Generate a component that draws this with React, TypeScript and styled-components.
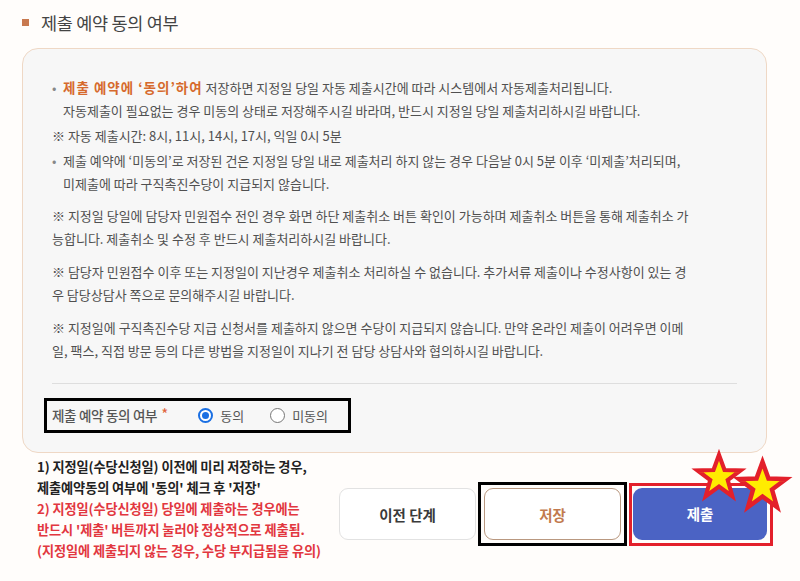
import React, { useState } from 'react'
import styled, { createGlobalStyle } from 'styled-components'

const GlobalStyle = createGlobalStyle`
    body {
        margin: 0;
        background: #fffdfb;
        font-family: 'Noto Sans CJK KR', 'Noto Sans', sans-serif;
    }
`

const Page = styled.div`
    padding: 12px 33px 0 22px;
    height: 581px;
    box-sizing: border-box;
`

const TitleRow = styled.div`
    display: flex;
    align-items: center;
    height: 20px;
`

const TitleMark = styled.span`
    width: 7px;
    height: 7px;
    background: #c8794f;
`

const TitleText = styled.h2`
    margin: 0 0 0 12px;
    font-size: 17.5px;
    font-weight: 400;
    color: #444;
    letter-spacing: -0.3px;
`

const Card = styled.div`
    margin-top: 16px;
    border: 1px solid #efd8c5;
    border-radius: 16px;
    background: #f7f7f7;
    padding: 27px 29px 19px;
    font-size: 13px;
    line-height: 23px;
    color: #505050;
`

const Line = styled.div<{ $gap?: number }>`
    white-space: nowrap;
    margin-top: ${({ $gap }) => $gap ?? 0}px;
`

const BulletItem = styled.div<{ $gap?: number }>`
    display: flex;
    white-space: nowrap;
    margin-top: ${({ $gap }) => $gap ?? 0}px;
`

const BulletDot = styled.span`
    width: 11px;
    flex-shrink: 0;
    color: #888;
`

const Highlight = styled.span`
    color: #d66a2d;
    font-weight: 700;
    font-size: 13.5px;
    letter-spacing: 1px;
`

const Divider = styled.hr`
    margin: 21px 0 0;
    border: 0;
    height: 1px;
    background: #dedede;
`

const ConsentBox = styled.div`
    margin: 14px 0 0 -8px;
    width: 307px;
    height: 35px;
    box-sizing: border-box;
    border: 3px solid #000;
    display: flex;
    align-items: center;
    padding: 0 5px;
    white-space: nowrap;

    & > * {
        flex-shrink: 0;
    }
`

const ConsentLabel = styled.span`
    font-size: 13.5px;
    font-weight: 500;
    color: #555;
    letter-spacing: -0.3px;
`

const Required = styled.span`
    color: #e0633a;
    font-size: 15px;
    line-height: 1;
    margin: 0 30px 0 4px;
    align-self: flex-start;
    padding-top: 5px;
`

const RadioLabel = styled.label`
    display: flex;
    align-items: center;
    gap: 7px;
    margin-right: 26px;
    font-size: 13px;
    color: #555;
    cursor: pointer;
`

const RadioCircle = styled.span<{ $checked: boolean }>`
    width: 15px;
    height: 15px;
    box-sizing: border-box;
    border-radius: 50%;
    background: #fff;
    border: ${({ $checked }) => ($checked ? '2px solid #1a6fe3' : '1px solid #767676')};
    display: flex;
    align-items: center;
    justify-content: center;

    &::after {
        content: '';
        width: 7px;
        height: 7px;
        border-radius: 50%;
        background: ${({ $checked }) => ($checked ? '#1a6fe3' : 'transparent')};
    }
`

const Bottom = styled.div`
    display: flex;
    align-items: flex-start;
`

const Notes = styled.div`
    margin: 3px 0 0 15px;
    font-size: 13.2px;
    font-weight: 700;
    line-height: 21px;
    letter-spacing: -0.1px;
`

const NoteLine = styled.div<{ $warn?: boolean }>`
    white-space: nowrap;
    color: ${({ $warn }) => ($warn ? '#e2373f' : '#222')};
`

const Buttons = styled.div`
    margin: 29px -6px 0 auto;
    display: flex;
    align-items: center;
`

// annotation frames drawn around the save / submit buttons
const Frame = styled.div<{ $color: string; $pad: string }>`
    position: relative;
    margin-left: 2px;
    border: 3px solid ${({ $color }) => $color};
    padding: ${({ $pad }) => $pad};
    display: flex;
`

const Button = styled.button<{ $variant: 'prev' | 'save' | 'submit' }>`
    height: 52px;
    box-sizing: border-box;
    border-radius: 9px;
    font-family: inherit;
    font-size: 14.5px;
    font-weight: 700;
    cursor: pointer;
    ${({ $variant }) =>
        $variant === 'prev'
            ? `width: 137px; background: #fff; border: 1px solid #e2e2e2; color: #3a3a3a;`
            : $variant === 'save'
            ? `width: 137px; background: #fff; border: 1px solid #b99880; color: #c27a4e;`
            : `width: 134px; background: #4b63c4; border: 0; color: #fff;`}
`

const Star = styled.svg<{ $left: number; $top: number }>`
    position: absolute;
    left: ${({ $left }) => $left}px;
    top: ${({ $top }) => $top}px;
    overflow: visible;
    pointer-events: none;
`

function StarMark({ left, top, w, h }: { left: number; top: number; w: number; h: number }) {
    return (
        <Star $left={left} $top={top} width={w} height={h} viewBox="0 0 100 100">
            <polygon
                points="50,4 62,37 97,38 69,59 79,94 50,73 21,94 31,59 3,38 38,37"
                fill="#ffec00"
                stroke="#e3202b"
                strokeWidth="9"
                strokeLinejoin="miter"
            />
        </Star>
    )
}

export default function App() {
    const [consent, setConsent] = useState(true)

    return (
        <>
            <GlobalStyle />
            <Page>
                <TitleRow>
                    <TitleMark />
                    <TitleText>제출 예약 동의 여부</TitleText>
                </TitleRow>

                <Card>
                    <BulletItem>
                        <BulletDot>•</BulletDot>
                        <div>
                            <Highlight>제출 예약에 ‘동의’하여</Highlight> 저장하면 지정일 당일 자동 제출시간에 따라
                            시스템에서 자동제출처리됩니다.
                            <br />
                            자동제출이 필요없는 경우 미동의 상태로 저장해주시길 바라며, 반드시 지정일 당일
                            제출처리하시길 바랍니다.
                        </div>
                    </BulletItem>
                    <Line $gap={2}>※ 자동 제출시간: 8시, 11시, 14시, 17시, 익일 0시 5분</Line>
                    <BulletItem $gap={2}>
                        <BulletDot>•</BulletDot>
                        <div>
                            제출 예약에 ‘미동의’로 저장된 건은 지정일 당일 내로 제출처리 하지 않는 경우 다음날 0시 5분
                            이후 ‘미제출’처리되며,
                            <br />
                            미제출에 따라 구직촉진수당이 지급되지 않습니다.
                        </div>
                    </BulletItem>

                    <Line $gap={9}>
                        ※ 지정일 당일에 담당자 민원접수 전인 경우 화면 하단 제출취소 버튼 확인이 가능하며 제출취소
                        버튼을 통해 제출취소 가
                        <br />
                        능합니다. 제출취소 및 수정 후 반드시 제출처리하시길 바랍니다.
                    </Line>
                    <Line $gap={10}>
                        ※ 담당자 민원접수 이후 또는 지정일이 지난경우 제출취소 처리하실 수 없습니다. 추가서류 제출이나
                        수정사항이 있는 경
                        <br />
                        우 담당상담사 쪽으로 문의해주시길 바랍니다.
                    </Line>
                    <Line $gap={10}>
                        ※ 지정일에 구직촉진수당 지급 신청서를 제출하지 않으면 수당이 지급되지 않습니다. 만약 온라인
                        제출이 어려우면 이메
                        <br />
                        일, 팩스, 직접 방문 등의 다른 방법을 지정일이 지나기 전 담당 상담사와 협의하시길 바랍니다.
                    </Line>

                    <Divider />

                    <ConsentBox>
                        <ConsentLabel>제출 예약 동의 여부</ConsentLabel>
                        <Required>*</Required>
                        <RadioLabel onClick={() => setConsent(true)}>
                            <RadioCircle $checked={consent} />
                            동의
                        </RadioLabel>
                        <RadioLabel onClick={() => setConsent(false)}>
                            <RadioCircle $checked={!consent} />
                            미동의
                        </RadioLabel>
                    </ConsentBox>
                </Card>

                <Bottom>
                    <Notes>
                        <NoteLine>1) 지정일(수당신청일) 이전에 미리 저장하는 경우,</NoteLine>
                        <NoteLine>제출예약동의 여부에 '동의' 체크 후 '저장'</NoteLine>
                        <NoteLine $warn>2) 지정일(수당신청일) 당일에 제출하는 경우에는</NoteLine>
                        <NoteLine $warn>반드시 '제출' 버튼까지 눌러야 정상적으로 제출됨.</NoteLine>
                        <NoteLine $warn>(지정일에 제출되지 않는 경우, 수당 부지급됨을 유의)</NoteLine>
                    </Notes>
                    <Buttons>
                        <Button $variant="prev">이전 단계</Button>
                        <Frame $color="#000" $pad="3px">
                            <Button $variant="save">저장</Button>
                        </Frame>
                        <Frame $color="#e3202b" $pad="2px 3px 3px 1px">
                            <Button $variant="submit">제출</Button>
                            <StarMark left={64} top={-34} w={46} h={48} />
                            <StarMark left={105} top={-26} w={51} h={50} />
                        </Frame>
                    </Buttons>
                </Bottom>
            </Page>
        </>
    )
}
